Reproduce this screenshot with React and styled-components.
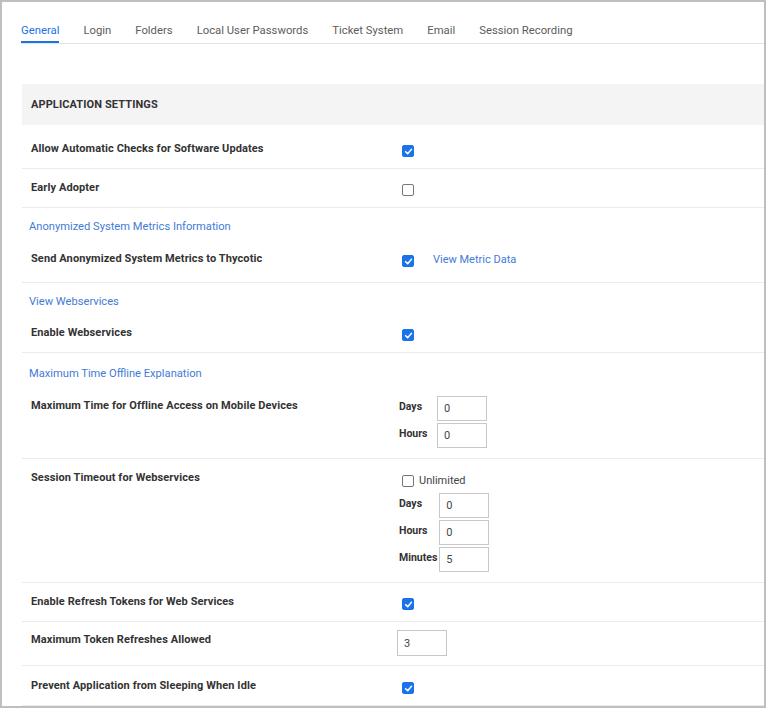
import React from "react";
import styled, { createGlobalStyle } from "styled-components";

const GlobalStyle = createGlobalStyle`
    html, body {
        margin: 0;
        padding: 0;
        background: #ffffff;
    }
    * {
        box-sizing: border-box;
    }
`;

const Frame = styled.div`
    width: 766px;
    height: 708px;
    border: 2px solid #bfbfbf;
    background: #ffffff;
    overflow: hidden;
    padding-left: 19px;
    font-family: Roboto, "Liberation Sans", sans-serif;
`;

const Tabs = styled.div`
    display: flex;
    gap: 24px;
    height: 42px;
    border-bottom: 1px solid #e4e4e4;
`;

const Tab = styled.div`
    height: 41px;
    padding-top: 22px;
    font-size: 11.3px;
    line-height: 14px;
    color: ${(p) => (p.$active ? "#1a73e8" : "#5c5c5c")};
    border-bottom: 2px solid ${(p) => (p.$active ? "#1a73e8" : "transparent")};
    white-space: nowrap;
`;

const Section = styled.div`
    margin: 40px 0 0 1px;
`;

const SectionHeader = styled.div`
    height: 41px;
    line-height: 41px;
    padding-left: 9px;
    background: #f4f4f4;
    font-size: 11px;
    letter-spacing: 0.1px;
    font-weight: 700;
    color: #333333;
    text-transform: uppercase;
`;

const Row = styled.div`
    display: flex;
    flex-direction: column;
    padding: ${(p) => p.$pt}px 0 ${(p) => p.$pb}px 9px;
    border-bottom: 1px solid #ebebeb;
`;

const InfoLink = styled.a`
    margin-left: -2px;
    margin-bottom: ${(p) => p.$gap}px;
    padding-top: 1px;
    font-size: 11.15px;
    line-height: 14px;
    color: #3f7bd6;
    text-decoration: none;
`;

const Body = styled.div`
    display: grid;
    grid-template-columns: 366px 1fr;
    align-items: start;
    justify-items: start;
`;

const Label = styled.div`
    margin-top: ${(p) => p.$mt || 0}px;
    padding-top: 1px;
    font-size: 11px;
    letter-spacing: 0.1px;
    line-height: 14px;
    font-weight: 700;
    color: #333333;
`;

const Control = styled.div`
    display: flex;
    flex-direction: column;
    align-items: flex-start;
`;

const Inline = styled.div`
    display: flex;
    align-items: center;
    margin-top: ${(p) => p.$mt || 0}px;
`;

const Box = styled.span`
    display: inline-flex;
    align-items: center;
    justify-content: center;
    width: 12px;
    height: 12px;
    border-radius: 2px;
    background: ${(p) => (p.$on ? "#1a73e8" : "#ffffff")};
    border: 1px solid ${(p) => (p.$on ? "#1a73e8" : "#767676")};
    margin: ${(p) => p.$mt}px 0 0 5px;
`;

const SideLink = styled.a`
    margin: 2px 0 0 19px;
    font-size: 11px;
    line-height: 14px;
    color: #3f7bd6;
    text-decoration: none;
`;

const OptionText = styled.span`
    margin-left: 5px;
    font-size: 11px;
    line-height: 14px;
    color: #444444;
`;

const TimeGrid = styled.div`
    display: grid;
    grid-template-columns: minmax(36px, auto) auto;
    column-gap: 2px;
    row-gap: 2px;
    margin: ${(p) => p.$mt || 0}px 0 0 2px;
`;

const TimeLabel = styled.span`
    padding-top: 4px;
    font-size: 10.5px;
    line-height: 14px;
    font-weight: 700;
    color: #333333;
`;

const Field = styled.input`
    width: ${(p) => p.$w || 50}px;
    height: ${(p) => p.$h || 25}px;
    margin: 0;
    padding: 0 6px;
    border: 1px solid #c8c8c8;
    border-radius: 0;
    font-family: Roboto, "Liberation Sans", sans-serif;
    font-size: 11px;
    color: #444444;
    background: #ffffff;
    outline: none;
`;

function Check({ on, mt = 4 }) {
    return (
        <Box $on={on} $mt={mt}>
            {on && (
                <svg width="9" height="9" viewBox="0 0 10 10">
                    <path
                        d="M1.8 5.2 L4.1 7.4 L8.3 2.6"
                        fill="none"
                        stroke="#ffffff"
                        strokeWidth="1.7"
                        strokeLinecap="round"
                        strokeLinejoin="round"
                    />
                </svg>
            )}
        </Box>
    );
}

function TimeFields({ items, mt }) {
    return (
        <TimeGrid $mt={mt}>
            {items.map(([name, value]) => (
                <React.Fragment key={name}>
                    <TimeLabel>{name}</TimeLabel>
                    <Field defaultValue={value} />
                </React.Fragment>
            ))}
        </TimeGrid>
    );
}

const tabs = [
    "General",
    "Login",
    "Folders",
    "Local User Passwords",
    "Ticket System",
    "Email",
    "Session Recording",
];

export default function App() {
    return (
        <>
            <GlobalStyle />
            <Frame>
                <Tabs>
                    {tabs.map((t, i) => (
                        <Tab key={t} $active={i === 0}>
                            {t}
                        </Tab>
                    ))}
                </Tabs>

                <Section>
                    <SectionHeader>Application Settings</SectionHeader>

                    <Row $pt={16} $pb={11}>
                        <Body>
                            <Label>Allow Automatic Checks for Software Updates</Label>
                            <Check on />
                        </Body>
                    </Row>

                    <Row $pt={11} $pb={11}>
                        <Body>
                            <Label>Early Adopter</Label>
                            <Check />
                        </Body>
                    </Row>

                    <Row $pt={11} $pb={15}>
                        <InfoLink href="#" $gap={17}>
                            Anonymized System Metrics Information
                        </InfoLink>
                        <Body>
                            <Label>Send Anonymized System Metrics to Thycotic</Label>
                            <Inline>
                                <Check on />
                                <SideLink href="#">View Metric Data</SideLink>
                            </Inline>
                        </Body>
                    </Row>

                    <Row $pt={11} $pb={11}>
                        <InfoLink href="#" $gap={16}>
                            View Webservices
                        </InfoLink>
                        <Body>
                            <Label>Enable Webservices</Label>
                            <Check on />
                        </Body>
                    </Row>

                    <Row $pt={13} $pb={10}>
                        <InfoLink href="#" $gap={15}>
                            Maximum Time Offline Explanation
                        </InfoLink>
                        <Body>
                            <Label $mt={2}>
                                Maximum Time for Offline Access on Mobile Devices
                            </Label>
                            <TimeFields
                                items={[
                                    ["Days", "0"],
                                    ["Hours", "0"],
                                ]}
                            />
                        </Body>
                    </Row>

                    <Row $pt={11} $pb={10}>
                        <Body>
                            <Label>Session Timeout for Webservices</Label>
                            <Control>
                                <Inline $mt={4}>
                                    <Check mt={0} />
                                    <OptionText>Unlimited</OptionText>
                                </Inline>
                                <TimeFields
                                    mt={5}
                                    items={[
                                        ["Days", "0"],
                                        ["Hours", "0"],
                                        ["Minutes", "5"],
                                    ]}
                                />
                            </Control>
                        </Body>
                    </Row>

                    <Row $pt={11} $pb={11}>
                        <Body>
                            <Label>Enable Refresh Tokens for Web Services</Label>
                            <Check on />
                        </Body>
                    </Row>

                    <Row $pt={8} $pb={9}>
                        <Body>
                            <Label $mt={2}>Maximum Token Refreshes Allowed</Label>
                            <Field $h={26} defaultValue="3" />
                        </Body>
                    </Row>

                    <Row $pt={12} $pb={11}>
                        <Body>
                            <Label>Prevent Application from Sleeping When Idle</Label>
                            <Check on />
                        </Body>
                    </Row>
                </Section>
            </Frame>
        </>
    );
}
